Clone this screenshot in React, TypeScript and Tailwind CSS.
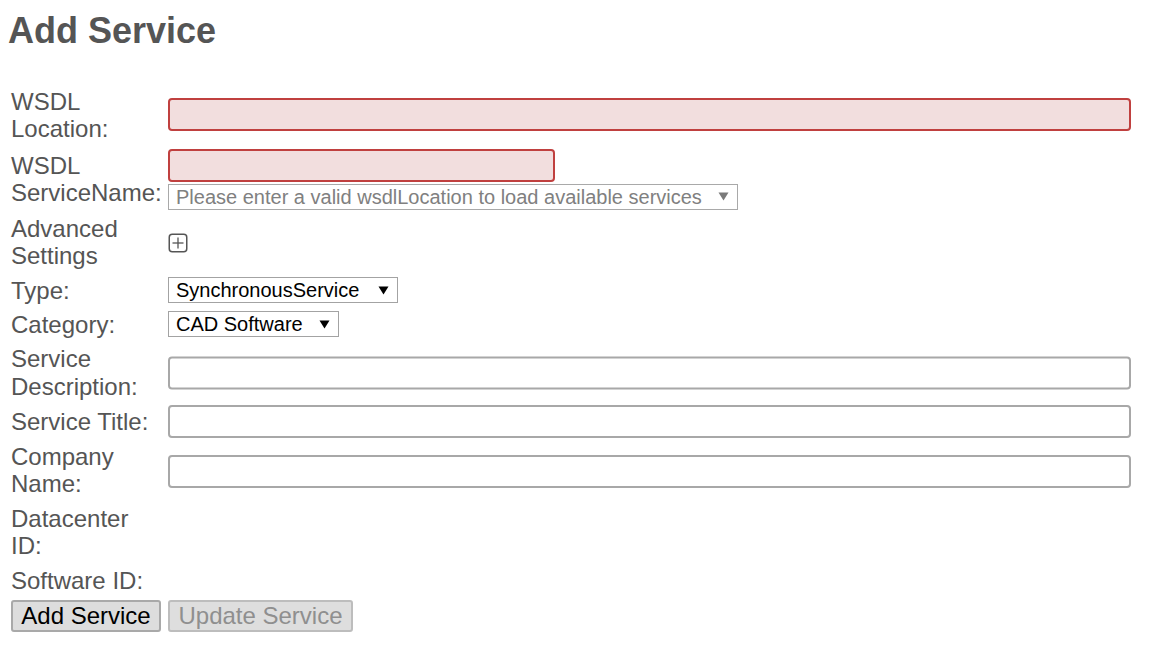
import React from "react";

const Arrow = ({ color }: { color: string }) => (
  <svg width="11" height="9" viewBox="0 0 11 9" className="shrink-0">
    <polygon points="0.5,0.5 10.5,0.5 5.5,8.5" fill={color} />
  </svg>
);

const PlusBox = () => (
  <svg width="20" height="20" viewBox="0 0 20 20">
    <rect x="1.25" y="1.25" width="17.5" height="17.5" rx="3" fill="none" stroke="#555" strokeWidth="1.5" />
    <line x1="10" y1="4.5" x2="10" y2="15.5" stroke="#555" strokeWidth="1.3" />
    <line x1="4.5" y1="10" x2="15.5" y2="10" stroke="#555" strokeWidth="1.3" />
  </svg>
);

function Row({ h, label, children }: { h: string; label: React.ReactNode; children?: React.ReactNode }) {
  return (
    <div className={`flex items-center ${h}`}>
      <div className="w-[157px] shrink-0 leading-[27.5px]">{label}</div>
      <div className="flex-1">{children}</div>
    </div>
  );
}

const errInput = "block h-[33px] rounded-[4px] border-2 border-[#c0403f] bg-[#f2dede]";
const grayInput = "block h-[33px] w-full rounded-[4px] border-2 border-[#a8a8a8] bg-white";

export default function App() {
  return (
    <div
      className="min-h-[646px] bg-white px-[8px] text-[#555555]"
      style={{ fontFamily: '"Liberation Sans", Arial, sans-serif' }}
    >
      <h1 className="mt-[9.5px] text-[36px] font-bold leading-[41px] text-[#555555]">Add Service</h1>
      <div className="mt-[32.5px] w-[1123px] pl-[3px] text-[24px]">
        <Row h="h-[64px]" label={<>WSDL<br />Location:</>}>
          <div className={`${errInput} -translate-y-[1px] w-full`} />
        </Row>
        <Row h="h-[64px]" label={<>WSDL<br />ServiceName:</>}>
          <div className="flex flex-col gap-[2px]">
            <div className={`${errInput} w-[387px]`} />
            <div className="flex h-[26px] w-[570px] items-center justify-between border border-[#a9a9a9] bg-white pl-[7px] pr-[8px] text-[20px] leading-[24px] text-[#808080]">
              <span>Please enter a valid wsdlLocation to load available services</span>
              <Arrow color="#7a7a7a" />
            </div>
          </div>
        </Row>
        <Row h="h-[62px]" label={<>Advanced<br />Settings</>}>
          <div className="pt-[2px]">
            <PlusBox />
          </div>
        </Row>
        <Row h="h-[34.5px]" label="Type:">
          <div className="flex h-[26px] w-[230px] items-center justify-between border border-[#a3a3a3] bg-white pl-[7px] pr-[8px] text-[20px] leading-[24px] text-black">
            <span>SynchronousService</span>
            <Arrow color="#000" />
          </div>
        </Row>
        <Row h="h-[33.5px]" label="Category:">
          <div className="flex h-[26px] w-[171px] items-center justify-between border border-[#a3a3a3] bg-white pl-[7px] pr-[8px] text-[20px] leading-[24px] text-black">
            <span>CAD Software</span>
            <Arrow color="#000" />
          </div>
        </Row>
        <Row h="h-[63px]" label={<>Service<br />Description:</>}>
          <div className={`${grayInput} translate-y-[0.5px]`} />
        </Row>
        <Row h="h-[34.5px]" label="Service Title:">
          <div className={grayInput} />
        </Row>
        <Row h="h-[63px]" label={<>Company<br />Name:</>}>
          <div className={`${grayInput} translate-y-[1px]`} />
        </Row>
        <Row h="h-[61.5px]" label={<>Datacenter<br />ID:</>} />
        <Row h="h-[35px]" label="Software ID:" />
        <div className="mt-[2px] flex gap-[7px]">
          <button className="h-[32px] w-[150px] rounded-[3px] border-2 border-[#a9a9a9] bg-[#dddddd] text-[24px] leading-[28px] text-black">
            Add Service
          </button>
          <button className="h-[32px] w-[185px] rounded-[3px] border-2 border-[#bdbdbd] bg-[#dedede] text-[24px] leading-[28px] text-[#8f8f8f]">
            Update Service
          </button>
        </div>
      </div>
    </div>
  );
}
